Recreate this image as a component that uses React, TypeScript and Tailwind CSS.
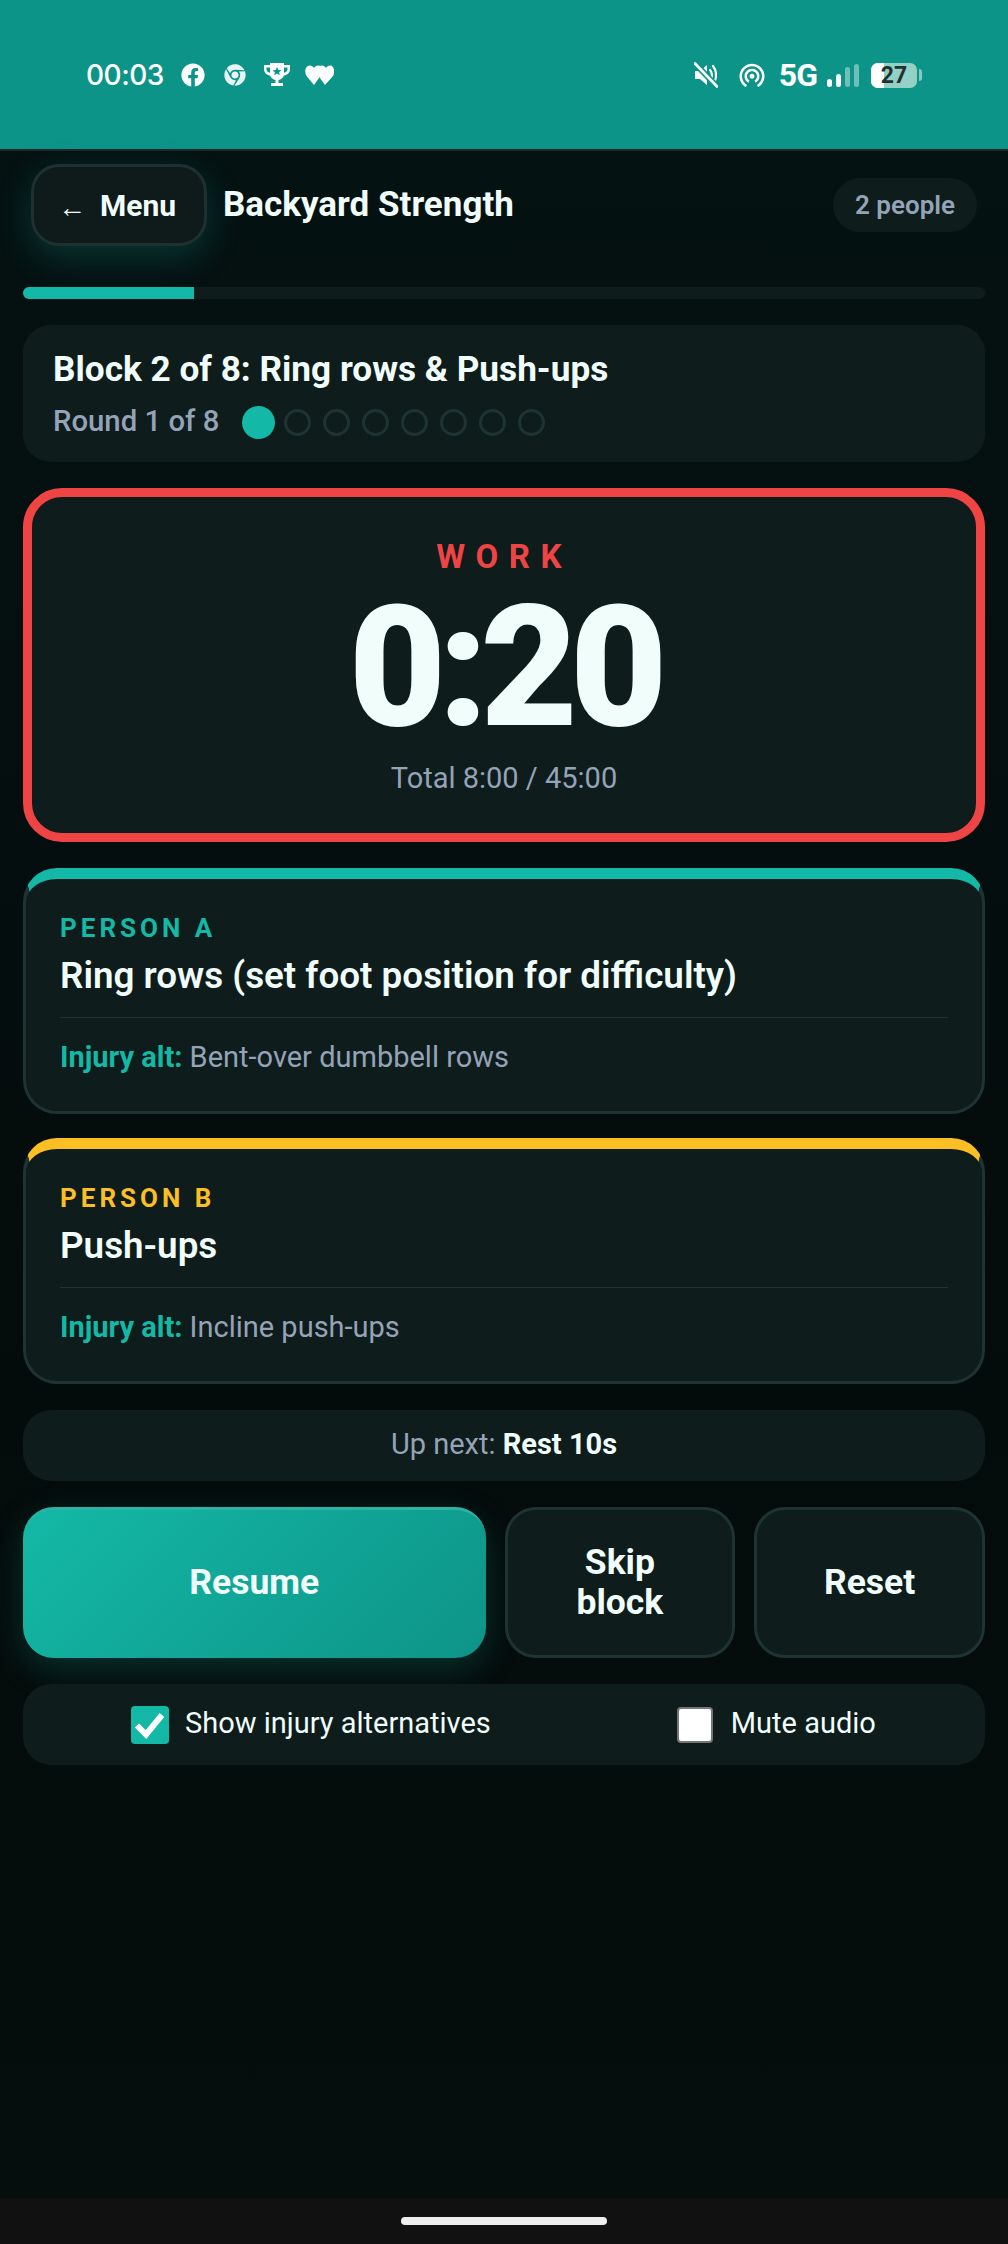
import { FaChrome, FaFacebook } from 'react-icons/fa'
import { MdWifiTethering } from 'react-icons/md'

function StatusBar() {
    return (
        <div className="flex h-[151px] shrink-0 justify-between border-b-[2px] border-[#222826] bg-[#0d9488] pl-[86px] pr-[86px] pt-[55px] text-white">
            <div className="flex h-[40px] items-center">
                <span className="w-[78px] font-['Inter',sans-serif] text-[28px] font-medium tracking-[-0.5px]">00:03</span>
                <FaFacebook className="ml-[17px] text-[24px]" />
                <FaChrome className="ml-[19px] text-[22px] opacity-90" />
                <svg className="ml-[18px]" width="26" height="24" viewBox="0 0 26 24" fill="currentColor">
                    <path fillRule="evenodd" d="M6 0h14v2h6v4c0 3.500-2.500 6-6 6.500C19 15 17 16.500 14.500 17v3H19v3H7v-3h4.500v-3C9 16.500 7 15 6 12.500 2.500 12 0 9.500 0 6V2h6zM2.500 4.500V6c0 2 1 3.200 3.500 3.800V4.500zm21 0H20v5.300c2.500-.6 3.500-1.800 3.500-3.800zM13 4l-1.300 2.900-3.100.3 2.300 2-.7 3 2.800-1.600 2.800 1.600-.7-3 2.300-2-3.100-.3z" />
                </svg>
                <svg className="ml-[15px]" width="29" height="20" viewBox="0 0 29 20" fill="currentColor">
                    <path d="M9 20 1.500 11C-1 6.800.4 1 4.500.5 6.500.3 8 1.300 9 3 10 1.300 11.500.3 13.500.5c2 .2 3 1.300 3.500 2.700l-3 9.800z" />
                    <path d="M20 20 13.500 11C11 6.800 12.400 1 16.500.5 18.500.3 20 1.300 21 3 22 1.300 23.500.3 25.500.5c3.600.5 4.600 6.300 2.500 10.500z" />
                </svg>
            </div>
            <div className="flex h-[40px] items-center">
                <svg width="24" height="26" viewBox="0 0 24 26" fill="none">
                    <path d="M1 9h5l7-6v20l-7-6H1z" fill="currentColor" />
                    <path d="M16 8c2 2 2.500 6 1 9M19 4c3.500 4 4 11 1.500 16" stroke="currentColor" strokeWidth="2.200" strokeLinecap="round" />
                    <path d="M1 1.500 23 24.500" stroke="#0d9488" strokeWidth="6" />
                    <path d="M1 1.500 23 24.500" stroke="currentColor" strokeWidth="2.600" strokeLinecap="round" />
                </svg>
                <MdWifiTethering className="ml-[19px] text-[30px]" />
                <span className="ml-[12px] font-['Roboto',sans-serif] text-[32px] font-bold leading-none tracking-[-1px]">5G</span>
                <div className="ml-[10px] flex items-end gap-[4px]">
                    <div className="h-[8px] w-[5px] rounded-full bg-white" />
                    <div className="h-[13px] w-[5px] rounded-full bg-white" />
                    <div className="h-[20px] w-[5px] rounded-full bg-white/40" />
                    <div className="h-[23px] w-[5px] rounded-full bg-white/40" />
                </div>
                <div className="ml-[12px] flex items-center">
                    <div className="relative flex h-[25px] w-[46px] items-center justify-center overflow-hidden rounded-[7px] bg-[#93d0c6]">
                        <div className="absolute bottom-0 left-0 top-0 w-[13px] bg-white" />
                        <span className="relative font-['Roboto',sans-serif] text-[23px] font-bold leading-none text-[#22302e]">27</span>
                    </div>
                    <div className="ml-[2px] h-[12px] w-[3px] rounded-r-full bg-white/50" />
                </div>
            </div>
        </div>
    )
}

function PersonCard({ label, name, alt, labelColor, topColor }: { label: string; name: string; alt: string; labelColor: string; topColor: string }) {
    return (
        <div className={`rounded-[34px] border-[3px] border-t-[11px] border-[#1f3333] bg-[#0f1c1c] px-[34px] pb-[34px] pt-[32px] ${topColor}`}>
            <div className={`text-[26px] font-bold leading-[34px] tracking-[4px] ${labelColor}`}>{label}</div>
            <div className="mt-[6px] text-[36.8px] font-semibold leading-[50px] text-[#f0fdfa]">{name}</div>
            <div className="mt-[16px] border-t border-[#1f3333] pt-[19px] text-[29px] leading-[40px] text-[#94a3b8]">
                <span className="font-bold text-[#14b8a6]">Injury alt:</span> {alt}
            </div>
        </div>
    )
}

export default function App() {
    return (
        <div className="flex h-[2244px] w-[1008px] flex-col overflow-hidden bg-[#040c0c] font-['Roboto',sans-serif] text-[#f0fdfa]">
            <StatusBar />

            <div className="flex flex-1 flex-col bg-[linear-gradient(180deg,#051212_0%,#040b0b_60%,#050d0d_100%)] px-[23px]">
                <div className="flex items-center px-[8px] pt-[13px]">
                    <button className="flex h-[82px] w-[176px] items-center justify-center gap-[14px] rounded-[28px] border-[3px] border-[#1f3030] bg-[#0f1a1a] pr-[4px] text-[30px] font-bold shadow-[0_11px_34px_rgba(20,184,166,0.22)]">
                        <span className="mt-[6px] text-[28px]">←</span> Menu
                    </button>
                    <h1 className="ml-[16px] text-[35px] font-bold">Backyard Strength</h1>
                    <span className="ml-auto flex h-[54px] items-center rounded-full bg-[#0f1c1c] px-[22px] text-[26px] font-semibold text-[#94a3b8]">2 people</span>
                </div>

                <div className="mt-[41px] h-[12px] overflow-hidden rounded-full bg-[#0f1c1c]">
                    <div className="h-full w-[171px] bg-[#14b8a6]" />
                </div>

                <div className="mt-[26px] rounded-[28px] bg-[#0f1c1c] px-[30px] py-[22px]">
                    <div className="text-[35.2px] font-bold leading-[44px]">Block 2 of 8: Ring rows &amp; Push-ups</div>
                    <div className="mt-[13px] flex h-[36px] items-center">
                        <span className="text-[29.3px] font-medium text-[#94a3b8]">Round 1 of 8</span>
                        <div className="ml-[26px] flex items-center gap-[12px]">
                            <div className="mx-[-3px] h-[33px] w-[33px] rounded-full bg-[#14b8a6]" />
                            {[1, 2, 3, 4, 5, 6, 7].map((i) => (
                                <div key={i} className="h-[27px] w-[27px] rounded-full border-[3px] border-[#1f3333]" />
                            ))}
                        </div>
                    </div>
                </div>

                <div className="mt-[26px] flex h-[354px] flex-col items-center rounded-[39px] border-[9px] border-[#ef4444] bg-[#0f1c1c] pt-[40px]">
                    <div className="text-[33px] font-bold leading-[40px] tracking-[10.500px] text-[#ef4444]">WORK</div>
                    <div className="mt-[6px] text-[168px] font-black leading-[170px] tracking-[-8px]">0:20</div>
                    <div className="mt-[6px] text-[29px] leading-[38px] text-[#94a3b8]">Total 8:00 / 45:00</div>
                </div>

                <div className="mt-[26px] flex flex-col gap-[24px]">
                    <PersonCard label="PERSON A" name="Ring rows (set foot position for difficulty)" alt="Bent-over dumbbell rows" labelColor="text-[#14b8a6]" topColor="border-t-[#14b8a6]" />
                    <PersonCard label="PERSON B" name="Push-ups" alt="Incline push-ups" labelColor="text-[#fbbf24]" topColor="border-t-[#fbbf24]" />
                </div>

                <div className="mt-[26px] flex h-[71px] items-center justify-center rounded-[28px] bg-[#0f1c1c] pb-[2px] text-[29px] text-[#94a3b8]">
                    <span>Up next: <strong className="font-bold text-[#f0fdfa]">Rest 10s</strong></span>
                </div>

                <div className="mt-[26px] flex h-[151px] gap-[19px]">
                    <button className="w-[463px] rounded-[31px] border-t-[3px] border-[#2db3a4] bg-[linear-gradient(135deg,#14b8a6,#0d9488)] pb-[2px] text-[35.5px] font-bold shadow-[0_11px_34px_rgba(20,184,166,0.22)]">Resume</button>
                    <button className="w-[231px] rounded-[31px] border-[3px] border-[#1f3333] bg-[#0f1c1c] pb-[2px] text-[35.5px] font-bold leading-[40px]">Skip<br />block</button>
                    <button className="w-[231px] rounded-[31px] border-[3px] border-[#1f3333] bg-[#0f1c1c] text-[35.5px] font-bold">Reset</button>
                </div>

                <div className="mt-[26px] flex h-[81px] items-center rounded-[28px] bg-[#0f1c1c] pl-[108px]">
                    <div className="flex h-[38px] w-[38px] items-center justify-center rounded-[4px] bg-[#14b8a6]">
                        <svg width="38" height="38" viewBox="0 0 38 38" fill="none">
                            <path d="M6 19.500 15 28.500 31 9" stroke="white" strokeWidth="6" />
                        </svg>
                    </div>
                    <span className="ml-[16px] pb-[2px] text-[29px]">Show injury alternatives</span>
                    <div className="ml-[186px] h-[36px] w-[36px] rounded-[4px] border-[2px] border-[#767676] bg-white" />
                    <span className="ml-[18px] pb-[2px] text-[29px]">Mute audio</span>
                </div>
            </div>

            <div className="flex h-[46px] shrink-0 justify-center bg-[#111111] pt-[19px]">
                <div className="h-[8px] w-[206px] rounded-full bg-[#eeeeee]" />
            </div>
        </div>
    )
}
